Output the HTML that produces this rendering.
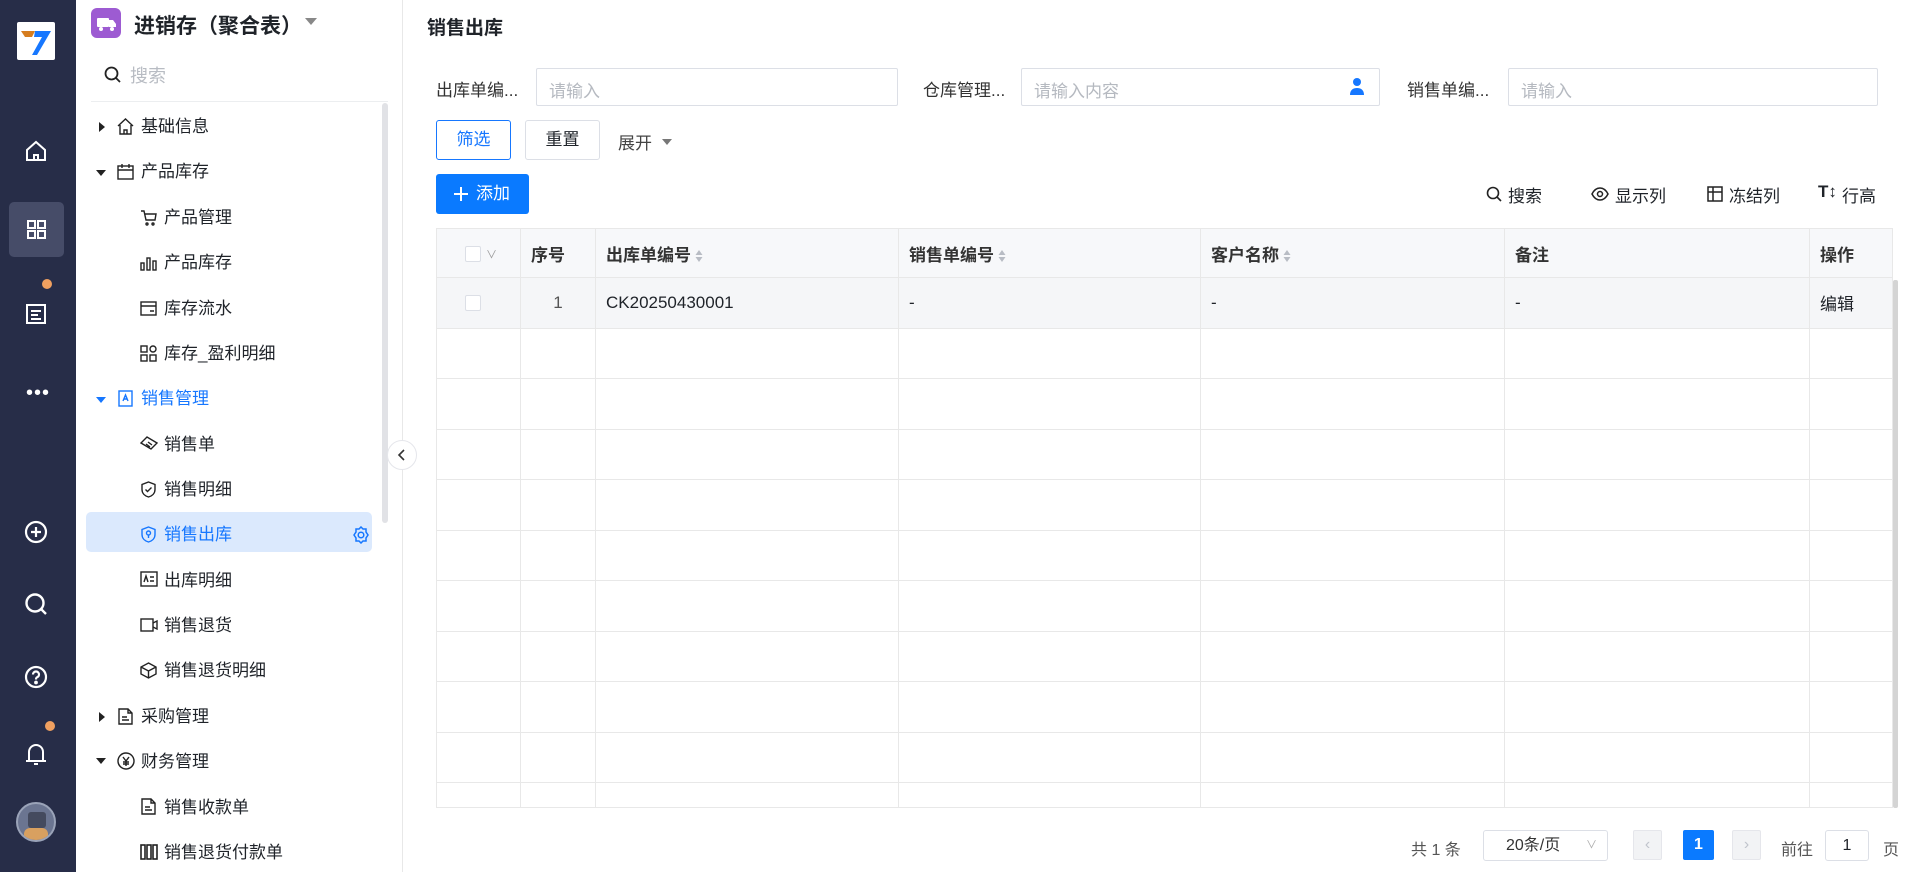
<!DOCTYPE html>
<html><head><meta charset="utf-8"><style>
*{margin:0;padding:0;box-sizing:border-box}
body{width:1905px;height:872px;overflow:hidden;background:#fff;font-family:"Liberation Sans","Noto Sans CJK SC",sans-serif;color:#1f2329;position:relative}
.a{position:absolute}
.nav{left:0;top:0;width:76px;height:872px;background:#272d48}
.side{left:76px;top:0;width:327px;height:872px;background:#fff;border-right:1px solid #e8e8e8;border-top-left-radius:10px}
.mi{position:absolute;font-size:17px;line-height:22px;color:#1f2329;white-space:nowrap}
.mi svg{position:absolute}
.lbl{font-size:17px;color:#333;top:76px}
.inp{top:68px;height:38px;border:1px solid #dcdfe6;border-radius:2px;font-size:17px;color:#b5b9c0;padding:8px 12px}
.btn{height:40px;border:1px solid #dcdfe6;border-radius:3px;font-size:17px;text-align:center;line-height:38px}
.tb{font-size:17px;top:182px;color:#1f2329}
table{border-collapse:collapse;table-layout:fixed}
td,th{border:1px solid #e8e8e8;height:50.5px;font-size:17px;padding:0 10px;text-align:left;white-space:nowrap}
th{background:#f7f8fa;font-weight:bold;color:#333;height:49px}
.srt{display:inline-block;vertical-align:middle;margin-left:4px}
</style></head><body>
<div class="a nav">
 <div class="a" style="left:17px;top:22px;width:38px;height:38px;background:#fff;border-radius:2px">
  <svg width="38" height="38" viewBox="0 0 38 38"><path d="M4 9h14l-3 6H8z" fill="#d67d1f"/><path d="M18 9h16L20 33h-5l10-18h-8z" fill="#1677ff"/></svg></div>
 <svg class="a" style="left:25px;top:140px" width="22" height="22" viewBox="0 0 22 22" fill="none" stroke="#fff" stroke-width="2"><path d="M2 10L11 2l9 8v10H2z"/><path d="M9 20v-5h4v5"/></svg>
 <div class="a" style="left:9px;top:202px;width:55px;height:55px;background:#464c68;border-radius:5px"></div>
 <svg class="a" style="left:27px;top:220px" width="19" height="19" viewBox="0 0 19 19" fill="none" stroke="#fff" stroke-width="2"><rect x="1" y="1" width="7" height="7"/><rect x="11" y="1" width="7" height="7"/><rect x="1" y="11" width="7" height="7"/><rect x="11" y="11" width="7" height="7"/></svg>
 <div class="a" style="left:42px;top:279px;width:10px;height:10px;border-radius:5px;background:#f0a060"></div>
 <svg class="a" style="left:26px;top:304px" width="20" height="20" viewBox="0 0 20 20" fill="none" stroke="#fff" stroke-width="2"><rect x="1" y="1" width="18" height="18"/><path d="M5 7h10M5 11h7M5 15h10"/></svg>
 <div class="a" style="left:26px;top:389px;color:#fff;font-size:20px;letter-spacing:1px;line-height:8px">•••</div>
 <svg class="a" style="left:24px;top:520px" width="24" height="24" viewBox="0 0 24 24" fill="none" stroke="#fff" stroke-width="2.2"><circle cx="12" cy="12" r="10"/><path d="M12 7v10M7 12h10"/></svg>
 <svg class="a" style="left:24px;top:592px" width="24" height="24" viewBox="0 0 24 24" fill="none" stroke="#fff" stroke-width="2.4"><circle cx="11" cy="11" r="8.5"/><path d="M17 17l5 5"/></svg>
 <svg class="a" style="left:24px;top:665px" width="24" height="24" viewBox="0 0 24 24" fill="none" stroke="#fff" stroke-width="2.2"><circle cx="12" cy="12" r="10"/><path d="M9 9.5a3 3 0 1 1 4 2.8c-1 .5-1 1-1 2.2"/><circle cx="12" cy="17.5" r=".8" fill="#fff"/></svg>
 <div class="a" style="left:45px;top:721px;width:10px;height:10px;border-radius:5px;background:#f0a060"></div>
 <svg class="a" style="left:25px;top:742px" width="22" height="24" viewBox="0 0 22 24" fill="none" stroke="#fff" stroke-width="2"><path d="M4 18V10a7 7 0 0 1 14 0v8M1 19h20M9 22h4"/></svg>
 <div class="a" style="left:16px;top:802px;width:40px;height:40px;border-radius:20px;background:#6b7591;border:2px solid #9aa3b8;overflow:hidden"><div class="a" style="left:10px;top:8px;width:18px;height:16px;background:#444a5e;border-radius:3px"></div><div class="a" style="left:6px;top:24px;width:24px;height:14px;background:#d8a060;border-radius:6px"></div></div>
</div>
<div class="a side">
 <div class="a" style="left:15px;top:8px;width:30px;height:30px;background:#9d5bd2;border-radius:6px"><svg width="30" height="30" viewBox="0 0 30 30" fill="#fff"><rect x="6" y="10" width="12" height="9" rx="1"/><path d="M18 12h4l3 4v3h-7z"/><circle cx="10" cy="21" r="2"/><circle cx="21" cy="21" r="2"/></svg></div>
 <div class="a" style="left:58px;top:10px;font-size:21px;font-weight:bold;color:#1f2329">进销存（聚合表）</div>
 <div class="a" style="left:229px;top:18px;width:0;height:0;border-left:6px solid transparent;border-right:6px solid transparent;border-top:7px solid #888"></div>
 <svg class="a" style="left:28px;top:66px" width="17" height="17" viewBox="0 0 17 17" fill="none" stroke="#222" stroke-width="1.8"><circle cx="7.5" cy="7.5" r="6"/><path d="M12 12l4 4"/></svg>
 <div class="a" style="left:54px;top:62px;font-size:18px;color:#b8bcc3">搜索</div>
 <div class="a" style="left:15px;top:101px;width:297px;height:1px;background:#eceef0"></div>
 <div class="a" style="left:306px;top:103px;width:6px;height:420px;background:#e1e2e6;border-radius:3px"></div>
 <div class="a" style="left:10px;top:512px;width:286px;height:40px;background:#dbe9fd;border-radius:5px"></div>
 <div class="a" style="left:311px;top:440px;width:30px;height:30px;border-radius:15px;background:#fff;border:1px solid #e5e6eb"><svg width="28" height="28" viewBox="0 0 28 28" fill="none" stroke="#333" stroke-width="1.6"><path d="M16 9l-5 5 5 5"/></svg></div>
</div>
<!-- menu -->
<div class="a" style="left:76px;top:0">
<span class="a" style="left:23px;top:122px;border-top:5px solid transparent;border-bottom:5px solid transparent;border-left:6px solid #222"></span>
<svg class="a" style="left:41px;top:118px" width="17" height="17" viewBox="0 0 17 17" fill="none" stroke="#222" stroke-width="1.4"><path d="M1 8L8.5 1 16 8M3 7v9h11V7M7 16v-4h3v4"/></svg>
<div class="mi" style="left:65px;top:116px">基础信息</div>

<span class="a" style="left:20px;top:170px;border-left:5px solid transparent;border-right:5px solid transparent;border-top:6px solid #222"></span>
<svg class="a" style="left:41px;top:163px" width="17" height="17" viewBox="0 0 17 17" fill="none" stroke="#222" stroke-width="1.4"><rect x="1" y="3" width="15" height="13"/><path d="M1 7h15M5 1v4M12 1v4"/></svg>
<div class="mi" style="left:65px;top:161px">产品库存</div>

<svg class="a" style="left:64px;top:209px" width="17" height="17" viewBox="0 0 17 17" fill="none" stroke="#222" stroke-width="1.4"><path d="M1 2h3l2 9h9l1-6H5"/><circle cx="7" cy="15" r="1"/><circle cx="13" cy="15" r="1"/></svg>
<div class="mi" style="left:88px;top:207px">产品管理</div>
<svg class="a" style="left:64px;top:254px" width="17" height="17" viewBox="0 0 17 17" fill="none" stroke="#222" stroke-width="1.4"><rect x="1" y="9" width="3" height="7"/><rect x="7" y="4" width="3" height="12"/><rect x="13" y="7" width="3" height="9"/></svg>
<div class="mi" style="left:88px;top:252px">产品库存</div>
<svg class="a" style="left:64px;top:300px" width="17" height="17" viewBox="0 0 17 17" fill="none" stroke="#222" stroke-width="1.4"><rect x="1" y="2" width="15" height="13"/><path d="M1 6h15M10 11h4"/></svg>
<div class="mi" style="left:88px;top:298px">库存流水</div>
<svg class="a" style="left:64px;top:345px" width="17" height="17" viewBox="0 0 17 17" fill="none" stroke="#222" stroke-width="1.4"><rect x="1" y="1" width="6" height="6"/><circle cx="13" cy="4" r="3"/><rect x="1" y="10" width="6" height="6"/><rect x="10" y="10" width="6" height="6"/></svg>
<div class="mi" style="left:88px;top:343px">库存_盈利明细</div>

<span class="a" style="left:20px;top:397px;border-left:5px solid transparent;border-right:5px solid transparent;border-top:6px solid #1677ff"></span>
<svg class="a" style="left:41px;top:390px" width="17" height="17" viewBox="0 0 17 17" fill="none" stroke="#1677ff" stroke-width="1.4"><rect x="2" y="1" width="13" height="15"/><path d="M6 11l2.5-6 2.5 6M7 9h3"/></svg>
<div class="mi" style="left:65px;top:388px;color:#1677ff">销售管理</div>

<svg class="a" style="left:64px;top:435px" width="18" height="17" viewBox="0 0 18 17" fill="none" stroke="#222" stroke-width="1.4"><path d="M1 8l6-6 10 6-6 6z M6 9l4 3M8 7l4 3"/></svg>
<div class="mi" style="left:88px;top:434px">销售单</div>
<svg class="a" style="left:64px;top:481px" width="17" height="17" viewBox="0 0 17 17" fill="none" stroke="#222" stroke-width="1.4"><path d="M8.5 1L15 3.5v5c0 4-3 6.5-6.5 7.5C5 15 2 12.5 2 8.5v-5z"/><path d="M5.5 8.5l2 2 4-4"/></svg>
<div class="mi" style="left:88px;top:479px">销售明细</div>
<svg class="a" style="left:64px;top:526px" width="17" height="17" viewBox="0 0 17 17" fill="none" stroke="#1677ff" stroke-width="1.4"><path d="M8.5 1L15 3.5v5c0 4-3 6.5-6.5 7.5C5 15 2 12.5 2 8.5v-5z"/><circle cx="8.5" cy="7" r="2"/><path d="M8.5 9v3"/></svg>
<div class="mi" style="left:88px;top:524px;color:#1677ff">销售出库</div>
<svg class="a" style="left:276px;top:526px" width="18" height="18" viewBox="0 0 18 18" fill="none" stroke="#1677ff" stroke-width="1.5"><path d="M9 1l2 2h3v3l2 3-2 3v3h-3l-2 2-2-2H4v-3L2 9l2-3V3h3z"/><circle cx="9" cy="9" r="2.8"/></svg>
<svg class="a" style="left:64px;top:571px" width="18" height="16" viewBox="0 0 18 16" fill="none" stroke="#222" stroke-width="1.4"><rect x="1" y="1" width="16" height="14"/><path d="M4 11l2-6 2 6M10 6h4M10 10h4"/></svg>
<div class="mi" style="left:88px;top:570px">出库明细</div>
<svg class="a" style="left:64px;top:617px" width="18" height="16" viewBox="0 0 18 16" fill="none" stroke="#222" stroke-width="1.4"><rect x="1" y="2" width="12" height="12"/><path d="M13 6l4-2v8l-4-2"/></svg>
<div class="mi" style="left:88px;top:615px">销售退货</div>
<svg class="a" style="left:64px;top:662px" width="17" height="17" viewBox="0 0 17 17" fill="none" stroke="#222" stroke-width="1.4"><path d="M8.5 1L16 5v7l-7.5 4L1 12V5z M1 5l7.5 4L16 5M8.5 9v7"/></svg>
<div class="mi" style="left:88px;top:660px">销售退货明细</div>

<span class="a" style="left:23px;top:712px;border-top:5px solid transparent;border-bottom:5px solid transparent;border-left:6px solid #222"></span>
<svg class="a" style="left:42px;top:708px" width="15" height="17" viewBox="0 0 15 17" fill="none" stroke="#222" stroke-width="1.4"><path d="M1 1h9l4 4v11H1zM10 1v4h4M4 9h5M4 12h7"/></svg>
<div class="mi" style="left:65px;top:706px">采购管理</div>
<span class="a" style="left:20px;top:758px;border-left:5px solid transparent;border-right:5px solid transparent;border-top:6px solid #222"></span>
<svg class="a" style="left:41px;top:752px" width="18" height="18" viewBox="0 0 18 18" fill="none" stroke="#222" stroke-width="1.4"><circle cx="9" cy="9" r="8"/><path d="M6 5l3 4 3-4M9 9v5M6 10h6M6 12h6"/></svg>
<div class="mi" style="left:65px;top:751px">财务管理</div>
<svg class="a" style="left:65px;top:798px" width="15" height="17" viewBox="0 0 15 17" fill="none" stroke="#222" stroke-width="1.4"><path d="M1 1h9l4 4v11H1zM10 1v4h4M4 9h5M4 12h7"/></svg>
<div class="mi" style="left:88px;top:797px">销售收款单</div>
<svg class="a" style="left:64px;top:844px" width="18" height="16" viewBox="0 0 18 16" fill="none" stroke="#222" stroke-width="1.6"><rect x="1" y="1" width="4" height="14"/><rect x="7" y="1" width="4" height="14"/><rect x="13" y="1" width="4" height="14"/></svg>
<div class="mi" style="left:88px;top:842px">销售退货付款单</div>
</div>

<!-- main -->
<div class="a" style="left:427px;top:13px;font-size:19px;font-weight:bold;color:#1f2329">销售出库</div>
<div class="a lbl" style="left:436px">出库单编...</div>
<div class="a inp" style="left:536px;width:362px">请输入</div>
<div class="a lbl" style="left:923px">仓库管理...</div>
<div class="a inp" style="left:1021px;width:359px">请输入内容</div>
<svg class="a" style="left:1349px;top:77px" width="16" height="19" viewBox="0 0 16 19" fill="#1677ff"><circle cx="8" cy="5" r="4"/><path d="M1 18c0-5 3-7 7-7s7 2 7 7z"/></svg>
<div class="a lbl" style="left:1407px">销售单编...</div>
<div class="a inp" style="left:1508px;width:370px">请输入</div>

<div class="a btn" style="left:436px;top:120px;width:75px;border-color:#1677ff;color:#1677ff">筛选</div>
<div class="a btn" style="left:525px;top:120px;width:75px">重置</div>
<div class="a" style="left:618px;top:129px;font-size:17px;color:#444">展开</div>
<span class="a" style="left:662px;top:139px;border-left:5px solid transparent;border-right:5px solid transparent;border-top:6px solid #777"></span>

<div class="a" style="left:436px;top:174px;width:93px;height:40px;background:#0a7aff;border-radius:3px;color:#fff;font-size:17px;line-height:40px;padding-left:40px">添加</div>
<svg class="a" style="left:453px;top:186px" width="16" height="16" viewBox="0 0 16 16" stroke="#fff" stroke-width="2"><path d="M8 1v14M1 8h14"/></svg>

<svg class="a" style="left:1486px;top:186px" width="16" height="16" viewBox="0 0 16 16" fill="none" stroke="#222" stroke-width="1.6"><circle cx="7" cy="7" r="5.5"/><path d="M11 11l4 4"/></svg>
<div class="a tb" style="left:1508px">搜索</div>
<svg class="a" style="left:1591px;top:186px" width="18" height="16" viewBox="0 0 18 16" fill="none" stroke="#222" stroke-width="1.5"><path d="M1 8c2-4 5-6 8-6s6 2 8 6c-2 4-5 6-8 6s-6-2-8-6z"/><circle cx="9" cy="8" r="2.5"/></svg>
<div class="a tb" style="left:1615px">显示列</div>
<svg class="a" style="left:1707px;top:186px" width="16" height="16" viewBox="0 0 16 16" fill="none" stroke="#222" stroke-width="1.5"><rect x="1" y="1" width="14" height="14"/><path d="M6 1v14M1 6h14"/></svg>
<div class="a tb" style="left:1729px">冻结列</div>
<div class="a tb" style="left:1818px;font-weight:bold">T<span style="font-weight:normal">↕</span></div>
<div class="a tb" style="left:1842px">行高</div>

<div class="a" style="left:436px;top:228px;width:1457px;height:580px;overflow:hidden;border-bottom:1px solid #e8e8e8">
<table style="width:1460px">
<colgroup><col style="width:84px"><col style="width:75px"><col style="width:303px"><col style="width:302px"><col style="width:304px"><col style="width:305px"><col style="width:87px"></colgroup>
<tr><th><span style="display:inline-block;width:16px;height:16px;border:1px solid #dcdfe6;border-radius:2px;background:#fff;vertical-align:middle;margin-left:18px"></span><span style="font-size:11px;color:#999;font-weight:normal;margin-left:5px">∨</span></th><th>序号</th>
<th>出库单编号<svg class="srt" width="8" height="14" viewBox="0 0 8 14" fill="#b8bcc4"><path d="M4 1l3.5 5h-7zM4 13L.5 8h7z"/></svg></th>
<th>销售单编号<svg class="srt" width="8" height="14" viewBox="0 0 8 14" fill="#b8bcc4"><path d="M4 1l3.5 5h-7zM4 13L.5 8h7z"/></svg></th>
<th>客户名称<svg class="srt" width="8" height="14" viewBox="0 0 8 14" fill="#b8bcc4"><path d="M4 1l3.5 5h-7zM4 13L.5 8h7z"/></svg></th><th>备注</th><th>操作</th></tr>
<tr style="background:#f5f6f8"><td><span style="display:inline-block;width:16px;height:16px;border:1px solid #dcdfe6;border-radius:2px;background:#fff;margin-left:18px;vertical-align:middle"></span></td><td style="text-align:center;color:#555">1</td><td>CK20250430001</td><td>-</td><td>-</td><td>-</td><td>编辑</td></tr>
<tr><td></td><td></td><td></td><td></td><td></td><td></td><td></td></tr>
<tr><td></td><td></td><td></td><td></td><td></td><td></td><td></td></tr>
<tr><td></td><td></td><td></td><td></td><td></td><td></td><td></td></tr>
<tr><td></td><td></td><td></td><td></td><td></td><td></td><td></td></tr>
<tr><td></td><td></td><td></td><td></td><td></td><td></td><td></td></tr>
<tr><td></td><td></td><td></td><td></td><td></td><td></td><td></td></tr>
<tr><td></td><td></td><td></td><td></td><td></td><td></td><td></td></tr>
<tr><td></td><td></td><td></td><td></td><td></td><td></td><td></td></tr>
<tr><td></td><td></td><td></td><td></td><td></td><td></td><td></td></tr>
<tr><td></td><td></td><td></td><td></td><td></td><td></td><td></td></tr>
<tr><td></td><td></td><td></td><td></td><td></td><td></td><td></td></tr>
</table>
</div>
<div class="a" style="left:1892px;top:228px;width:1px;height:580px;background:#e8e8e8"></div>
<div class="a" style="left:1893px;top:280px;width:5px;height:528px;background:#d4d4d4;border-radius:2px"></div>

<div class="a" style="left:1411px;top:836px;font-size:16px;color:#555">共 1 条</div>
<div class="a" style="left:1483px;top:830px;width:125px;height:31px;border:1px solid #dcdfe6;border-radius:3px;font-size:16px;line-height:29px;padding-left:22px;color:#333">20条/页<span style="position:absolute;right:10px;color:#aaa;font-size:11px">∨</span></div>
<div class="a" style="left:1633px;top:830px;width:29px;height:30px;background:#f2f3f5;border:1px solid #e5e6eb;border-radius:2px;color:#c0c4cc;text-align:center;line-height:28px">‹</div>
<div class="a" style="left:1683px;top:830px;width:31px;height:30px;background:#0a7aff;border-radius:2px;color:#fff;text-align:center;line-height:30px;font-size:16px;font-weight:bold">1</div>
<div class="a" style="left:1732px;top:830px;width:29px;height:30px;background:#f2f3f5;border:1px solid #e5e6eb;border-radius:2px;color:#c0c4cc;text-align:center;line-height:28px">›</div>
<div class="a" style="left:1781px;top:836px;font-size:16px;color:#555">前往</div>
<div class="a" style="left:1825px;top:830px;width:44px;height:31px;border:1px solid #dcdfe6;border-radius:3px;text-align:center;line-height:29px;font-size:16px">1</div>
<div class="a" style="left:1883px;top:836px;font-size:16px;color:#555">页</div>
</body></html>
